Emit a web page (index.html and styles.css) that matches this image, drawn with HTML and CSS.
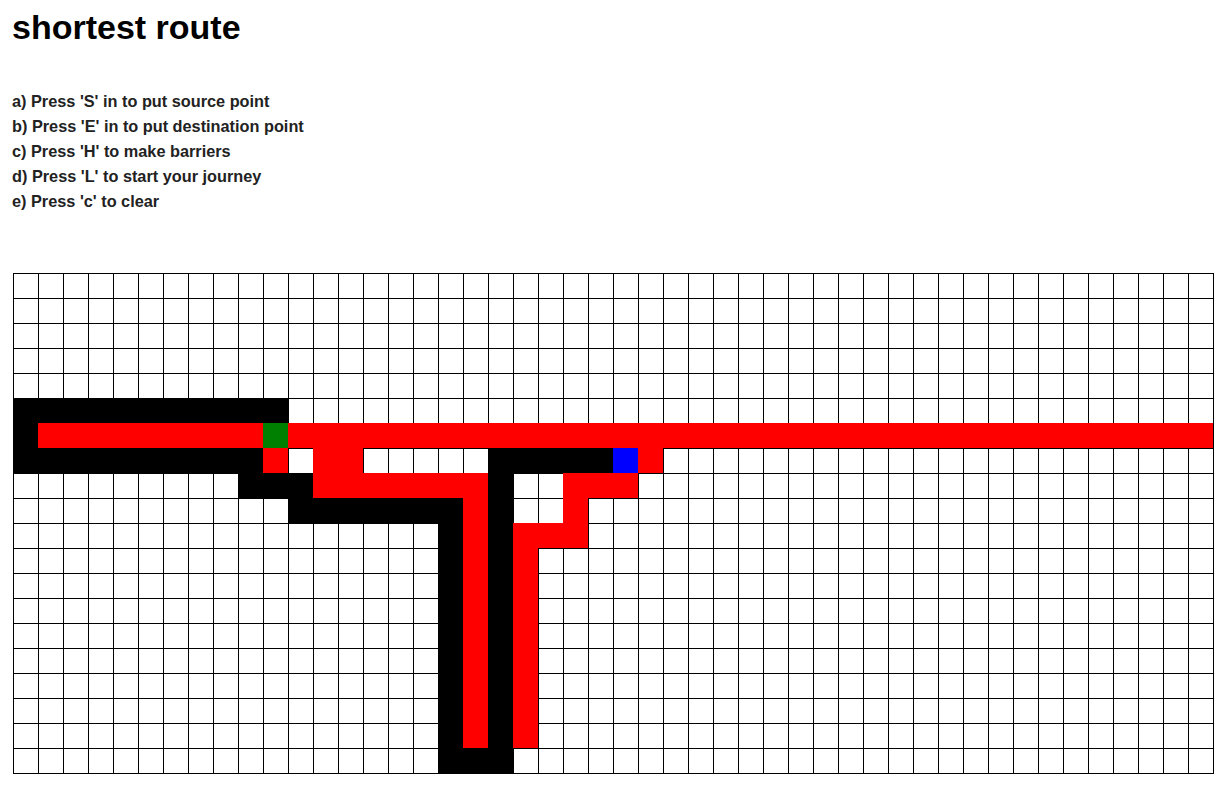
FILE: index.html
```html
<!DOCTYPE html>
<html lang="en">
<head>
    <meta charset="UTF-8">
    <meta name="viewport" content="width=device-width, initial-scale=1.0">
    <title>shortest route</title>
    <link rel="stylesheet" href="styles.css">
</head>
<body>
    <h1>shortest route</h1>
    <div class="help">
        <p>a) Press 'S' in to put source point</p>
        <p>b) Press 'E' in to put destination point</p>
        <p>c) Press 'H' to make barriers</p>
        <p>d) Press 'L' to start your journey</p>
        <p>e) Press 'c' to clear</p>
    </div>
    <div class="board" id="board"></div>
    <script>
        // . empty, B barrier, R path, G source, U destination
        const rows = [];
        for (let i = 0; i < 5; i++) rows.push('.'.repeat(48));
        rows.push('B'.repeat(11) + '.'.repeat(37));
        rows.push('B' + 'R'.repeat(9) + 'G' + 'R'.repeat(37));
        rows.push('B'.repeat(10) + 'R.RR' + '.'.repeat(5) + 'B'.repeat(5) + 'UR' + '.'.repeat(22));
        rows.push('.'.repeat(9) + 'BBB' + 'R'.repeat(7) + 'B..RRR' + '.'.repeat(23));
        rows.push('.'.repeat(11) + 'B'.repeat(7) + 'RB..R' + '.'.repeat(25));
        rows.push('.'.repeat(17) + 'BRBRRR' + '.'.repeat(25));
        for (let i = 0; i < 8; i++) rows.push('.'.repeat(17) + 'BRBR' + '.'.repeat(27));
        rows.push('.'.repeat(17) + 'BBB' + '.'.repeat(28));

        const names = { '.': 'cell', 'B': 'cell wall', 'R': 'cell path', 'G': 'cell start', 'U': 'cell end' };
        const board = document.getElementById('board');
        rows.forEach(row => {
            for (const ch of row) {
                const div = document.createElement('div');
                div.className = names[ch];
                board.appendChild(div);
            }
        });
    </script>
</body>
</html>
```

FILE: styles.css
```css
body {
    font-family: "Liberation Sans", Arial, sans-serif;
    background-color: #fff;
    color: #000;
    margin: 0;
    padding: 0 12px;
}
h1 {
    font-size: 34px;
    line-height: 39px;
    margin: 8px 0 0;
}
.help {
    margin-top: 42px;
    color: #222;
}
.help p {
    font-size: 16.3px;
    font-weight: bold;
    line-height: 25px;
    margin: 0;
}
.board {
    display: grid;
    grid-template-columns: repeat(48, 25px);
    grid-template-rows: repeat(20, 25px);
    width: 1200px;
    margin: 59px 0 0 1px;
    border-right: 1px solid #000;
    border-bottom: 1px solid #000;
}
.cell {
    box-sizing: border-box;
    border-left: 1px solid #000;
    border-top: 1px solid #000;
    background-color: #fff;
}
.wall {
    border: none;
    background-color: #000;
}
.path {
    border: none;
    background-color: #f00;
}
.start {
    border: none;
    background-color: #008000;
}
.end {
    border: none;
    background-color: #00f;
}
```
